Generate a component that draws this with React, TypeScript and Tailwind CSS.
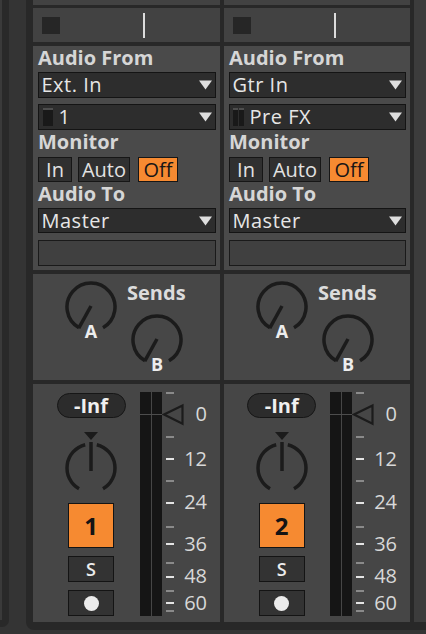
import React from "react";

function polar(cx: number, cy: number, r: number, a: number): [number, number] {
  const t = (a * Math.PI) / 180;
  return [cx + r * Math.sin(t), cy - r * Math.cos(t)];
}
function arcD(cx: number, cy: number, r: number, a0: number, a1: number) {
  const [x0, y0] = polar(cx, cy, r, a0);
  const [x1, y1] = polar(cx, cy, r, a1);
  const large = a1 - a0 > 180 ? 1 : 0;
  return `M ${x0} ${y0} A ${r} ${r} 0 ${large} 1 ${x1} ${y1}`;
}

const KNOB = "#1b1b1b";

function SendKnob({ label }: { label: string }) {
  const c = 27;
  const r = 24;
  const [nx, ny] = polar(c, c, r + 0.5, 210);
  return (
    <div className="relative w-[54px] h-[54px]">
      <svg width="54" height="54" viewBox="0 0 54 54" className="block">
        <path d={arcD(c, c, r, 210, 510)} fill="none" stroke={KNOB} strokeWidth="3.5" />
        <line x1={c} y1={c - 1} x2={nx} y2={ny} stroke={KNOB} strokeWidth="3.5" />
      </svg>
      <div className="absolute left-0 right-0 top-[42px] h-[18px] text-center text-[18px] leading-[18px] font-bold text-[#ededed]">
        {label}
      </div>
    </div>
  );
}

function PanKnob() {
  const c = 27;
  const r = 24;
  return (
    <svg width="54" height="54" viewBox="0 0 54 54" className="block">
      <path d={arcD(c, c, r, 14, 150)} fill="none" stroke={KNOB} strokeWidth="3.5" />
      <path d={arcD(c, c, r, 210, 346)} fill="none" stroke={KNOB} strokeWidth="3.5" />
      <line x1={c} y1={30} x2={c} y2={1} stroke={KNOB} strokeWidth="3.5" />
    </svg>
  );
}

function Caret() {
  return (
    <svg width="13" height="10" viewBox="0 0 13 10" className="block shrink-0">
      <polygon points="0,0.5 13,0.5 6.5,9.5" fill="#dedede" />
    </svg>
  );
}

function Dropdown({
  children,
  icon,
  h = "h-[26px]",
}: {
  children: React.ReactNode;
  icon?: React.ReactNode;
  h?: string;
}) {
  return (
    <div
      className={`${h} border-[1.5px] border-[#141414] bg-[#2d2d2d] flex items-center pl-[2.5px] pr-[3px]`}
    >
      {icon}
      <span className="flex-1 text-[20px] leading-[22px] font-medium text-[#e6e6e6] whitespace-nowrap tracking-[0.5px]">
        {children}
      </span>
      <Caret />
    </div>
  );
}

function Label({ children, cls = "" }: { children: React.ReactNode; cls?: string }) {
  return (
    <div className={`h-[20px] text-[20px] leading-[20px] font-bold text-[#d6d6d6] whitespace-nowrap ${cls}`}>
      {children}
    </div>
  );
}

function MiniMeter({ double }: { double: boolean }) {
  const bar = (
    <div className="w-[5px] h-[18px] bg-[#191919] flex flex-col">
      <div className="h-[2px] bg-[#4e4e4e]" />
    </div>
  );
  if (double) {
    return (
      <div className="ml-[0px] mr-[6px] flex gap-[1px]">
        {bar}
        {bar}
      </div>
    );
  }
  return (
    <div className="ml-[1px] mr-[6px] w-[10px] h-[18px] bg-[#191919] flex flex-col">
      <div className="h-[2px] bg-[#4e4e4e]" />
    </div>
  );
}

const grayTicks = [0, 44, 88, 134, 170, 198, 218];
const whiteTicks = [66, 110, 151, 184, 210];
const scaleLabels = [
  { t: "0", c: "top-[12px]" },
  { t: "12", c: "top-[57px]" },
  { t: "24", c: "top-[100px]" },
  { t: "36", c: "top-[142px]" },
  { t: "48", c: "top-[174px]" },
  { t: "60", c: "top-[201px]" },
];

function Scale() {
  return (
    <div className="relative w-[58px] h-[224px] mt-[8px]">
      <svg width="24" height="224" viewBox="0 0 24 224" className="block">
        {grayTicks.map((y) => (
          <rect key={"g" + y} x="4" y={y} width="8" height="2" fill="#8a8a8a" />
        ))}
        {whiteTicks.map((y) => (
          <rect key={"w" + y} x="4" y={y} width="8" height="2" fill="#e4e4e4" />
        ))}
        <polygon points="2,22.5 20.5,13.5 20.5,31.8" fill="none" stroke={KNOB} strokeWidth="2.2" strokeLinejoin="miter" />
      </svg>
      {scaleLabels.map((l) => (
        <div
          key={l.t}
          className={`absolute right-[13px] ${l.c} h-[20px] text-[20px] leading-[20px] font-medium text-[#d8d8d8]`}
        >
          {l.t}
        </div>
      ))}
    </div>
  );
}

function Column({
  w,
  src,
  sub,
  double,
  num,
}: {
  w: string;
  src: string;
  sub: string;
  double: boolean;
  num: string;
}) {
  return (
    <div className={`${w} flex flex-col shrink-0`}>
      <div className="h-[5px] bg-[#424242]" />
      <div className="h-[34px] mt-[3px] bg-[#424242] flex items-center pl-[9px]">
        <div className="w-[18px] h-[17px] bg-[#262626]" />
        <div className="ml-[83px] w-[1.5px] h-[25px] bg-[#dcdcdc]" />
      </div>

      <div className="mt-[4px] h-[224px] bg-[#4a4a4a] pl-[5px] pr-[4px] pt-[2px] flex flex-col">
        <Label>Audio From</Label>
        <div className="mt-[4px]">
          <Dropdown>{src}</Dropdown>
        </div>
        <div className="mt-[6px]">
          <Dropdown icon={<MiniMeter double={double} />}>{sub}</Dropdown>
        </div>
        <Label cls="mt-[2px]">Monitor</Label>
        <div className="mt-[5px] h-[25px] flex text-[20px] leading-[20px] font-medium">
          <div className="w-[34px] h-[25px] border-[1.5px] border-[#161616] bg-[#303030] flex items-center justify-center text-[#e2e2e2]">
            In
          </div>
          <div className="ml-[6px] w-[52px] h-[25px] border-[1.5px] border-[#161616] bg-[#303030] flex items-center justify-center text-[#e2e2e2]">
            Auto
          </div>
          <div className="ml-[8px] w-[40px] h-[25px] border-[1.5px] border-[#161616] bg-[#f68a31] flex items-center justify-center text-[#161616]">
            Off
          </div>
        </div>
        <Label cls="mt-[2px]">Audio To</Label>
        <div className="mt-[4px]">
          <Dropdown h="h-[25px]">Master</Dropdown>
        </div>
        <div className="mt-[7px] h-[26px] border-[1.5px] border-[#1a1a1a] bg-[#404040]" />
      </div>

      <div className="mt-[4px] h-[106px] bg-[#474747] flex">
        <div className="ml-[31px] mt-[6px]">
          <SendKnob label="A" />
        </div>
        <div className="ml-[9px] pt-[9px] flex flex-col">
          <div className="h-[20px] text-[20px] leading-[20px] font-bold text-[#dcdcdc]">Sends</div>
          <div className="ml-[3px] mt-[10px]">
            <SendKnob label="B" />
          </div>
        </div>
      </div>

      <div className="mt-[4px] h-[238px] bg-[#464646] flex">
        <div className="w-[107px] pl-[9px] flex flex-col items-center">
          <div className="mt-[9px] w-[69px] h-[25px] rounded-full border-[1.5px] border-[#161616] bg-[#2c2c2c] flex items-center justify-center text-[20px] leading-[20px] font-bold text-[#f0f0f0]">
            -Inf
          </div>
          <svg width="14" height="8" viewBox="0 0 14 8" className="block mt-[14px]">
            <polygon points="0,0 14,0 7,8" fill={KNOB} />
          </svg>
          <div className="mt-[1px]">
            <PanKnob />
          </div>
          <div className="mt-[8px] w-[46px] h-[45px] border-[1.5px] border-[#141414] bg-[#f68a31] flex items-center justify-center text-[24px] leading-[24px] font-bold text-[#141414]">
            {num}
          </div>
          <div className="mt-[8px] w-[46px] h-[26px] border-[1.5px] border-[#141414] bg-[#333333] flex items-center justify-center text-[18px] leading-[18px] font-semibold text-[#ececec]">
            S
          </div>
          <div className="mt-[8px] w-[46px] h-[26px] border-[1.5px] border-[#141414] bg-[#333333] flex items-center justify-center">
            <div className="w-[15px] h-[15px] rounded-full bg-[#ececec]" />
          </div>
        </div>
        <div className="relative mt-[8px] h-[224px] flex gap-[1px]">
          <div className="w-[11px] h-[224px] bg-[#151515]" />
          <div className="w-[10px] h-[224px] bg-[#151515]" />
          <div className="absolute left-0 right-0 top-[21.5px] h-[1.5px] bg-[#4d4d4d]" />
        </div>
        <Scale />
      </div>
    </div>
  );
}

export default function App() {
  return (
    <div className="w-[426px] h-[634px] bg-[#343434] flex overflow-hidden font-['Open_Sans',sans-serif]">
      <div className="w-[26px] flex shrink-0">
        <div className="w-[9px] h-[627px] bg-[#292929] rounded-br-[7px] flex">
          <div className="w-[2px] h-[620px] bg-[#3a3a3a]" />
        </div>
      </div>
      <div className="flex-1 h-[630px] bg-[#282828] rounded-bl-[8px] pl-[7px] flex gap-[4px]">
        <Column w="w-[187px]" src="Ext. In" sub="1" double={false} num="1" />
        <Column w="w-[186px]" src="Gtr In" sub="Pre FX" double={true} num="2" />
        <div className="w-[12px] h-[622px] bg-[#3c3c3c] shrink-0" />
      </div>
    </div>
  );
}
